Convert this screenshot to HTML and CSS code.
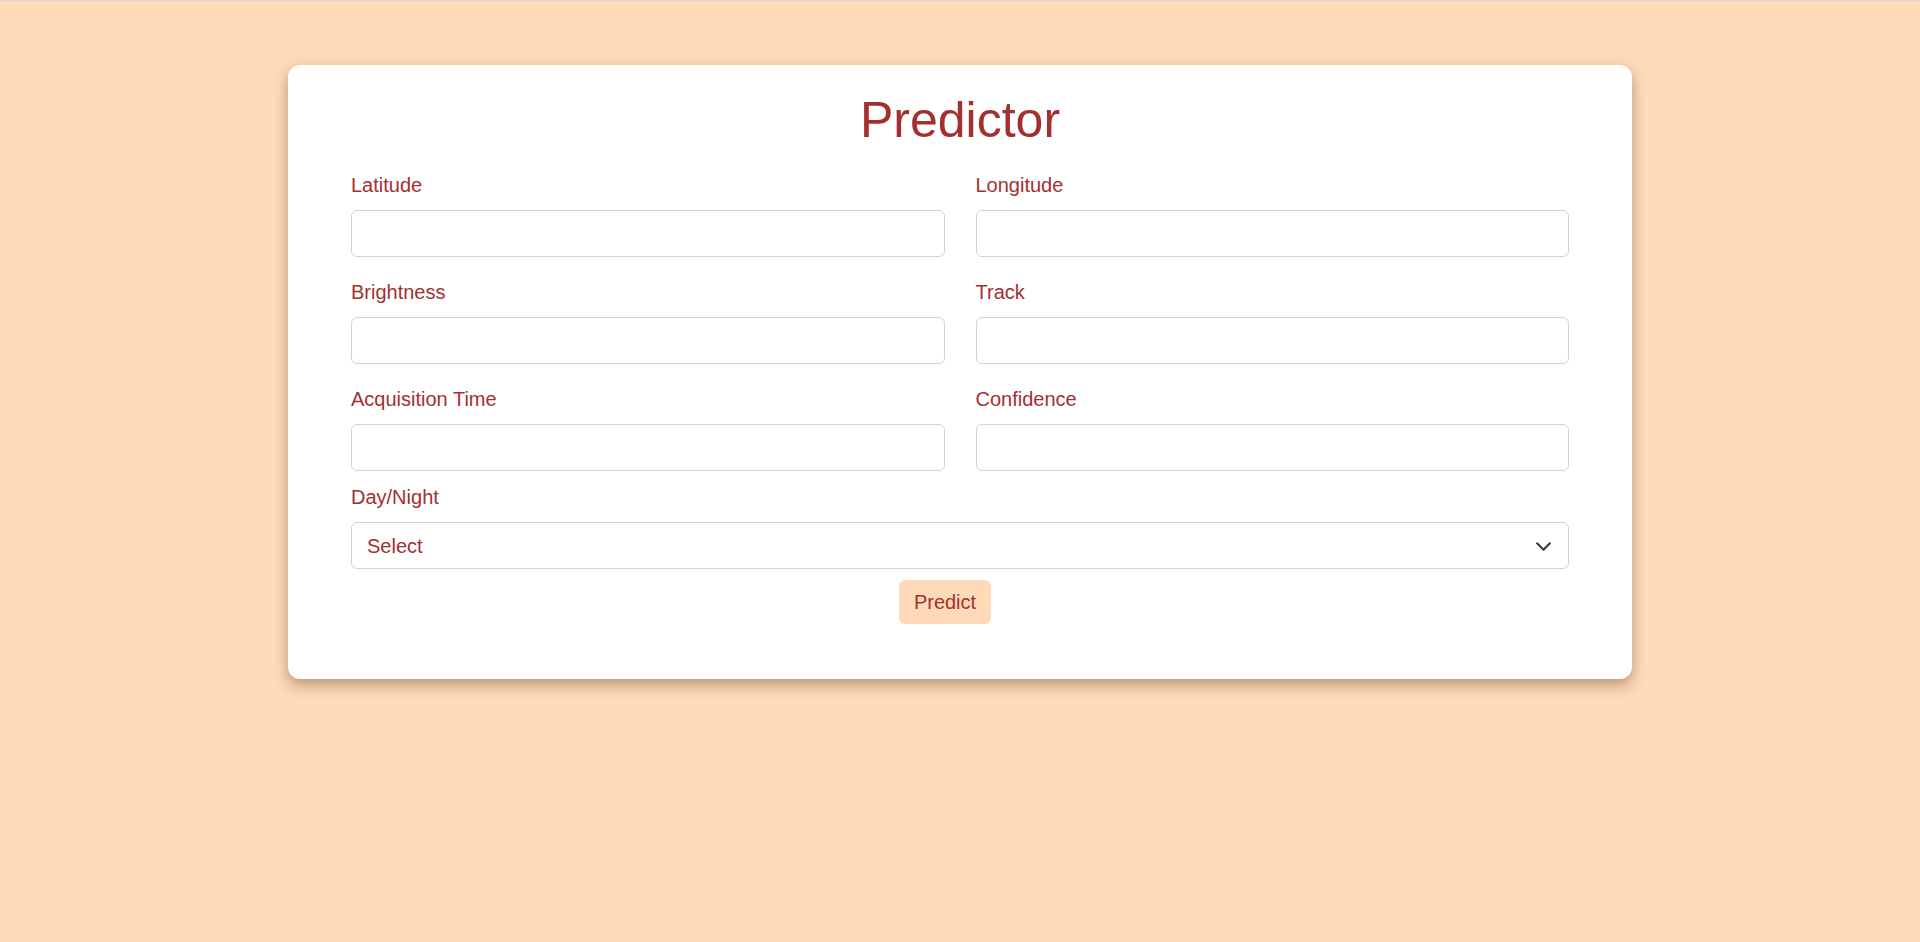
FILE: index.html
```html
<!DOCTYPE html>
<html lang="en">
<head>
<meta charset="utf-8">
<title>Predictor</title>
<link rel="stylesheet" href="styles.css">
</head>
<body>
<div class="page">
  <div class="card">
    <h1 class="title">Predictor</h1>
    <form class="form">
      <div class="grid">
        <div class="field">
          <label class="label" for="lat">Latitude</label>
          <input class="input" id="lat" type="text">
        </div>
        <div class="field">
          <label class="label" for="lon">Longitude</label>
          <input class="input" id="lon" type="text">
        </div>
        <div class="field">
          <label class="label" for="bri">Brightness</label>
          <input class="input" id="bri" type="text">
        </div>
        <div class="field">
          <label class="label" for="trk">Track</label>
          <input class="input" id="trk" type="text">
        </div>
        <div class="field">
          <label class="label" for="acq">Acquisition Time</label>
          <input class="input" id="acq" type="text">
        </div>
        <div class="field">
          <label class="label" for="conf">Confidence</label>
          <input class="input" id="conf" type="text">
        </div>
      </div>
      <div class="field field-full">
        <label class="label" for="dn">Day/Night</label>
        <div class="select-wrap">
          <select class="select" id="dn">
            <option>Select</option>
            <option>Day</option>
            <option>Night</option>
          </select>
          <svg class="chevron" viewBox="0 0 16 16" width="17" height="17" aria-hidden="true">
            <path d="M2 5l6 6 6-6" fill="none" stroke="#343a40" stroke-width="2" stroke-linecap="round" stroke-linejoin="round"/>
          </svg>
        </div>
      </div>
      <div class="actions">
        <button class="btn" type="button">Predict</button>
      </div>
    </form>
  </div>
</div>
</body>
</html>
```

FILE: styles.css
```css
html, body {
  margin: 0;
  padding: 0;
}

body {
  background: #fedab9;
  font-family: "Liberation Sans", Arial, sans-serif;
  color: #a3302f;
  min-height: 942px;
}

.page {
  border-top: 1px solid #d9d9d9;
  padding-top: 64px;
  display: flex;
  justify-content: center;
}

.card {
  width: 1344px;
  box-sizing: border-box;
  background: #ffffff;
  border-radius: 12px;
  box-shadow: 0 6px 14px rgba(80, 40, 10, 0.38);
  padding: 26px 63px 55px;
}

.title {
  margin: 0 0 21px;
  font-size: 50px;
  line-height: 58px;
  font-weight: 400;
  text-align: center;
  color: #a3302f;
}

.form {
  display: flex;
  flex-direction: column;
}

.grid {
  display: grid;
  grid-template-columns: 1fr 1fr;
  column-gap: 31px;
  row-gap: 20px;
}

.field {
  display: flex;
  flex-direction: column;
}

.field-full {
  margin-top: 11px;
}

.label {
  font-size: 20px;
  line-height: 30px;
  margin-bottom: 10px;
  color: #a3302f;
}

.input,
.select {
  box-sizing: border-box;
  height: 47px;
  width: 100%;
  border: 1px solid #ced4da;
  border-radius: 6px;
  background: #ffffff;
  font-family: "Liberation Sans", Arial, sans-serif;
  font-size: 20px;
  color: #a3302f;
  padding: 0 15px;
  margin: 0;
  outline: none;
}

.select-wrap {
  position: relative;
}

.select {
  appearance: none;
  -webkit-appearance: none;
  padding-right: 50px;
}

.chevron {
  position: absolute;
  right: 17px;
  top: 50%;
  margin-top: -8px;
  pointer-events: none;
}

.actions {
  display: flex;
  justify-content: center;
  margin-top: 11px;
}

.btn {
  background: #fedab9;
  color: #a3302f;
  border: none;
  border-radius: 6px;
  font-family: "Liberation Sans", Arial, sans-serif;
  font-size: 20px;
  line-height: 30px;
  padding: 7px 15px;
  margin-right: 30px;
  cursor: pointer;
}
```
